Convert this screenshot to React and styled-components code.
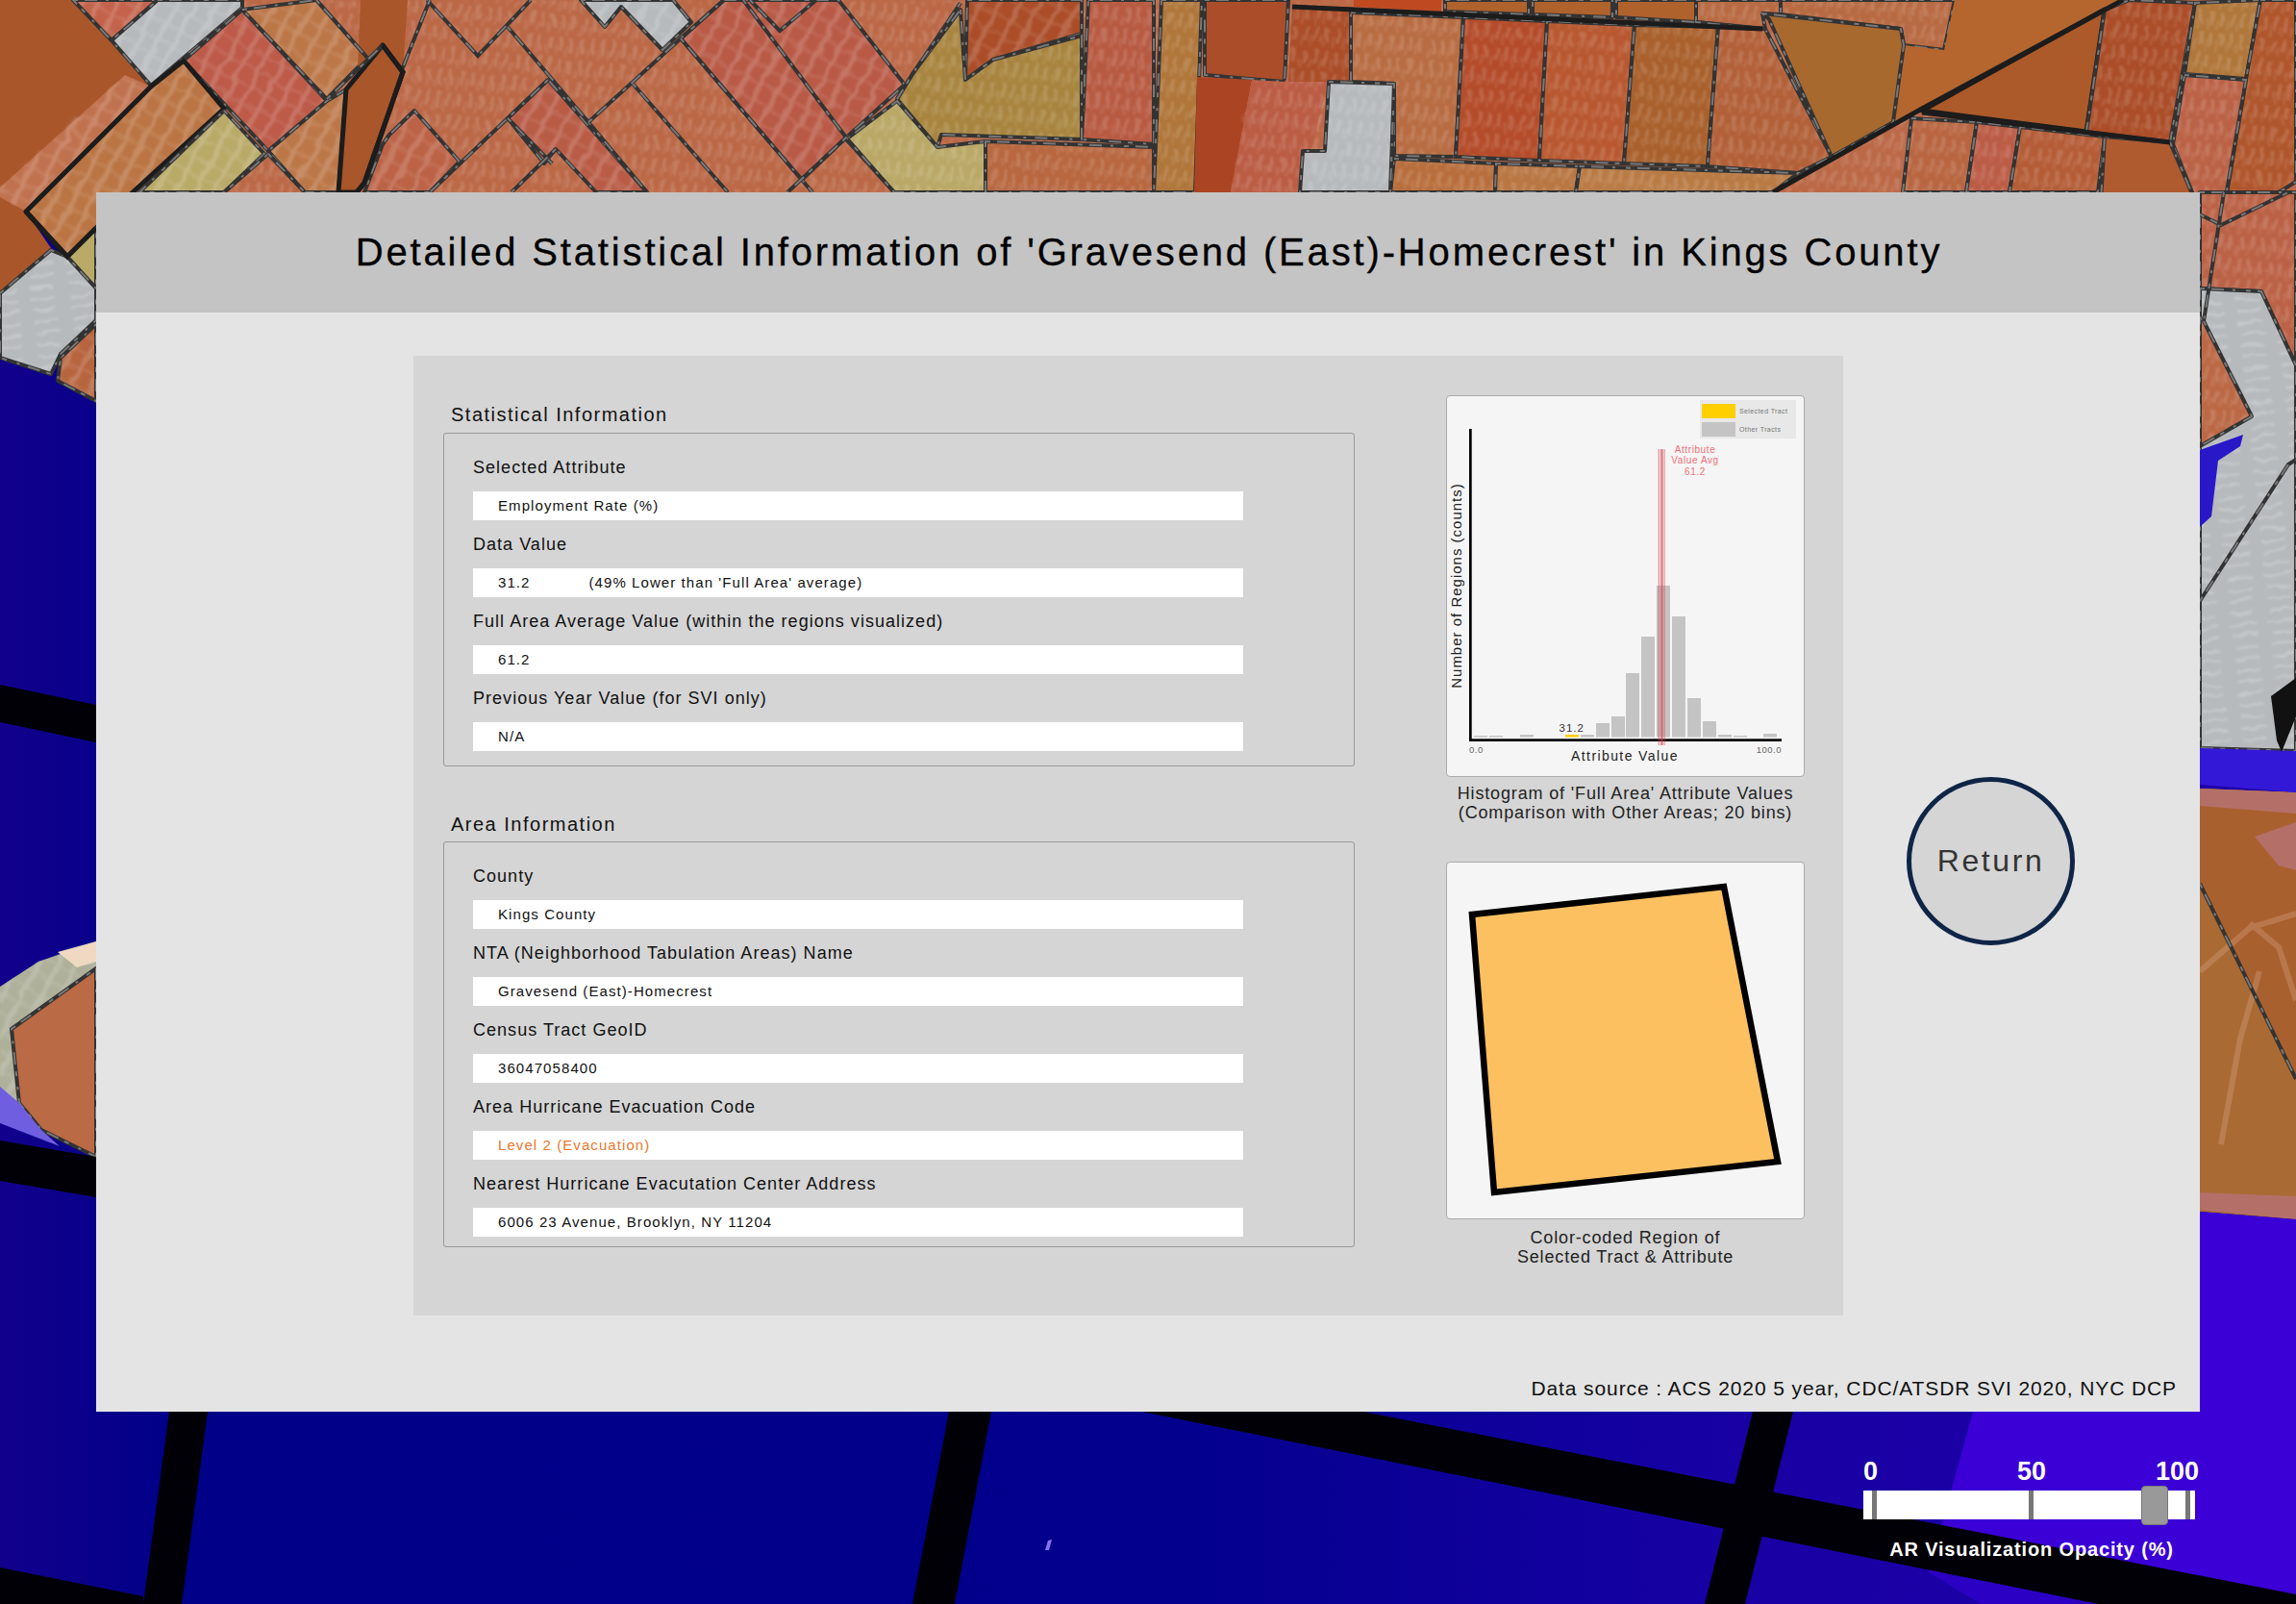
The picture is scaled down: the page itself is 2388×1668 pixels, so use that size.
import React from "react";
import styled, { createGlobalStyle } from "styled-components";

const GlobalStyle = createGlobalStyle`
  html, body { margin: 0; padding: 0; }
  body { font-family: "Liberation Sans", Arial, sans-serif; color: #111; }
`;

const Page = styled("div")`
  position: relative;
  width: 2388px;
  height: 1668px;
  overflow: hidden;
  padding: 200px 100px 0;
  box-sizing: border-box;
  background: #000088;
`;

const MapLayer = styled("svg")`
  position: absolute;
  inset: 0;
`;

const Modal = styled("main")`
  position: relative;
  width: 2188px;
  height: 1268px;
  background: #e4e4e4;
`;

const Header = styled("header")`
  height: 125px;
  display: flex;
  align-items: center;
  justify-content: center;
  padding-left: 2px;
  background: #c4c4c4;
`;

const Title = styled("h1")`
  margin: 0;
  font-size: 40px;
  font-weight: 400;
  letter-spacing: 2.85px;
  color: #000;
  -webkit-text-stroke: 0.3px #000;
`;

const Body = styled("div")`
  display: flex;
  align-items: flex-start;
  gap: 66px;
  padding: 45px 0 0 330px;
`;

const Panel = styled("section")`
  width: 1487px;
  height: 998px;
  box-sizing: border-box;
  display: flex;
  padding: 41px 0 0 31px;
  background: #d5d5d5;
`;

const InfoColumn = styled("div")`
  width: 948px;
  margin-right: 95px;
  margin-top: 8px;
`;

const SectionTitle = styled("h2")`
  margin: ${props => (props.$first ? "0" : "48px")} 0 ${props => (props.$first ? "7px" : "6px")} 8px;
  font-size: 20px;
  line-height: 24px;
  font-weight: 400;
  letter-spacing: 1.5px;
`;

const FieldBox = styled("div")`
  width: 948px;
  box-sizing: border-box;
  padding: 23px 0 ${props => props.$bottom}px 30px;
  border: 1px solid #999;
  border-radius: 3px;
  display: flex;
  flex-direction: column;
  gap: 13px;
`;

const Field = styled("div")`
  display: flex;
  flex-direction: column;
  gap: 12px;
`;

const FieldLabel = styled("div")`
  font-size: 18px;
  line-height: 25px;
  letter-spacing: 1.03px;
`;

const FieldValue = styled("div")`
  width: 801px;
  height: 30px;
  box-sizing: border-box;
  display: flex;
  align-items: center;
  padding: 0 0 1px 26px;
  background: #fff;
  font-size: 15px;
  letter-spacing: 1.08px;
  color: ${props => props.$color || "#111"};
`;

const ValueNote = styled("span")`
  margin-left: 61px;
`;

const ChartColumn = styled("div")`
  width: 373px;
  display: flex;
  flex-direction: column;
  gap: 41px;
`;

const Figure = styled("figure")`
  margin: 0;
`;

const ChartCard = styled("div")`
  width: 373px;
  height: ${props => props.$height}px;
  box-sizing: border-box;
  background: #f5f5f5;
  border: 1px solid #aaa;
  border-radius: 4px;
  svg { display: block; }
`;

const Caption = styled("figcaption")`
  margin-top: ${props => props.$top}px;
  text-align: center;
  font-size: 18px;
  line-height: 20px;
  letter-spacing: 0.85px;
  color: #222;
`;

const ReturnButton = styled("button")`
  width: 175px;
  height: 175px;
  margin-top: 438px;
  padding: 0;
  border: 5px solid #0f2547;
  border-radius: 50%;
  background: #d5d5d5;
  font-family: inherit;
  font-size: 32px;
  letter-spacing: 2.6px;
  color: #333;
`;

const Source = styled("footer")`
  margin-top: 64px;
  padding-right: 24px;
  text-align: right;
  font-size: 21px;
  line-height: 24px;
  letter-spacing: 0.9px;
`;

const OpacityControl = styled("div")`
  position: relative;
  width: 350px;
  margin: 47px 0 0 1838px;
  color: #fff;
`;

const ScaleRow = styled("div")`
  display: grid;
  grid-template-columns: 160px 144px auto;
  height: 30px;
  font-size: 27px;
  line-height: 30px;
  font-weight: 700;
`;

const Track = styled("div")`
  position: relative;
  width: 345px;
  height: 30px;
  margin-top: 5px;
  background: #fff;
`;

const Tick = styled("i")`
  position: absolute;
  top: 0;
  bottom: 0;
  left: ${props => props.$left}px;
  width: 5px;
  background: #777;
`;

const Thumb = styled("i")`
  position: absolute;
  top: -5px;
  left: 289px;
  width: 28px;
  height: 41px;
  box-sizing: border-box;
  background: #999;
  border: 1px solid #777;
  border-radius: 4px;
`;

const ControlLabel = styled("div")`
  margin-top: 19px;
  text-align: center;
  font-size: 20px;
  line-height: 24px;
  font-weight: 700;
  letter-spacing: 0.85px;
`;

// map pieces: colour, texture (a diagonal, b upright, c streaks, none), outline, points
const CELLS = [
  ["#a9562a", "", 0, "0,0 76,0 157,90 27,220 53,258 0,305"],
  ["#c0724e", "a", 0, "0,195 130,78 157,90 27,220 0,205"],
  ["#c4634c", "a", 1, "76,0 164,0 116,42"],
  ["#b6babd", "a", 1, "164,0 252,0 252,8 157,89 116,42"],
  ["#bd5a48", "a", 1, "252,10 340,105 279,157 191,63"],
  ["#bb7544", "a", 2, "27,220 157,90 191,63 233,113 138,200 100,237 70,267"],
  ["#b9aa68", "a", 1, "233,115 275,160 233,200 145,200"],
  ["#bc7748", "a", 1, "252,10 329,0 382,60 340,103"],
  ["#bc7748", "a", 1, "340,105 360,93 352,200 317,200 279,157"],
  ["#a9562a", "", 0, "375,0 424,0 419,75 398,47 372,70"],
  ["#a9562a", "", 2, "398,47 419,75 379,190 371,200 352,200 360,93"],
  ["#bc6246", "a", 1, "431,115 478,168 447,200 379,200 398,150 405,140"],
  ["#b95c46", "a", 1, "528,123 570,83 673,200 620,200 578,155 566,170"],
  ["#b95a46", "a", 1, "708,40 753,0 872,0 941,88 880,143 834,187"],
  ["#b6babd", "a", 1, "604,0 700,0 719,23 689,52 646,7 629,28"],
  ["#ab4d28", "a", 1, "1006,0 1125,0 1125,35 1033,62 1004,83"],
  ["#b85a42", "b", 1, "1132,0 1200,0 1200,150 1125,145"],
  ["#a8853f", "b", 1, "999,10 1004,83 1033,62 1125,37 1125,145 979,140 975,153 933,103 949,77"],
  ["#b9a866", "b", 1, "933,105 975,153 1025,147 1025,200 930,200 880,145"],
  ["#b8673f", "b", 1, "1025,147 1200,153 1200,200 1025,200"],
  ["#b0763a", "b", 1, "1208,0 1250,0 1243,200 1200,200"],
  ["#ab4d28", "", 1, "1253,0 1340,0 1336,85 1253,78"],
  ["#ab4422", "", 0, "1245,80 1302,83 1280,200 1242,200"],
  ["#bb5c44", "b", 0, "1302,83 1336,85 1405,13 1382,85 1352,200 1280,200"],
  ["#ab4d28", "b", 0, "1344,7 1408,7 1405,85 1340,85"],
  ["#bf4a22", "", 0, "1408,0 1499,0 1499,12 1408,7"],
  ["#b0622c", "", 1, "1503,0 1590,0 1590,15 1503,12"],
  ["#b0622c", "", 1, "1594,0 1677,0 1677,18 1594,15"],
  ["#b0622c", "", 1, "1681,0 1764,0 1764,23 1681,18"],
  ["#b86c42", "b", 1, "1405,13 1522,18 1514,163 1450,162 1450,87 1405,85"],
  ["#b44c2a", "b", 1, "1522,18 1609,22 1601,167 1514,163"],
  ["#b85830", "b", 1, "1609,22 1700,26 1689,170 1601,167"],
  ["#a9602c", "b", 1, "1700,26 1787,28 1776,173 1689,170"],
  ["#b26038", "b", 1, "1787,28 1836,30 1905,163 1870,180 1776,173"],
  ["#b86a42", "b", 1, "1852,0 2033,0 2022,52 1980,47 1977,30 1852,15"],
  ["#b86a42", "b", 1, "1764,0 1852,0 1852,15 1833,14 1836,30 1764,23"],
  ["#b5662f", "", 0, "2033,0 2208,0 1999,113 1969,127 1980,47 2022,52"],
  ["#a8692e", "", 1, "1833,14 1977,30 1980,47 1969,127 1905,163 1840,20"],
  ["#ac5a2a", "", 2, "2189,10 2170,137 1999,115"],
  ["#ab4d28", "b", 1, "2215,0 2283,3 2257,148 2170,137 2189,10"],
  ["#b0763a", "b", 1, "2283,3 2351,0 2336,82 2272,77"],
  ["#b0562c", "b", 1, "2351,0 2388,0 2388,189 2310,237 2336,82"],
  ["#bb6246", "b", 1, "2272,78 2336,83 2310,233 2288,220 2260,150"],
  ["#b86540", "b", 1, "1988,123 2056,127 2045,200 1979,200"],
  ["#bb5c46", "b", 1, "2056,127 2101,132 2090,200 2045,200"],
  ["#b45c36", "b", 1, "2101,132 2189,142 2182,200 2090,200"],
  ["#b05a30", "", 1, "2189,142 2257,148 2288,220 2288,260 2182,260"],
  ["#b86e3c", "b", 1, "1450,165 1556,170 1555,200 1446,200"],
  ["#b87642", "b", 1, "1556,170 1643,173 1639,200 1555,200"],
  ["#b97a44", "b", 1, "1643,173 1870,180 1844,200 1639,200"],
  ["#b6babd", "b", 1, "1382,85 1450,87 1446,200 1352,200 1355,157 1378,157"],
  ["#bb6246", "b", 1, "2288,200 2388,200 2388,380 2352,303 2288,300"],
  ["#b6babd", "c", 1, "2288,300 2352,303 2388,380 2388,781 2288,778"],
  ["#bb6844", "b", 1, "2292,334 2342,433 2288,464 2288,330"],
  ["#b9aa68", "", 1, "70,267 100,237 100,300"],
  ["#b7653f", "a", 1, "63,372 100,337 100,417 60,396"],
  ["#b6babd", "c", 1, "0,305 53,260 70,267 100,300 100,333 63,368 53,389 0,372"],
  ["#aeb09a", "a", 0, "0,1026 40,1000 100,979 100,1007 12,1070 20,1147 43,1175 0,1150"],
  ["#ba6a44", "", 1, "12,1070 100,1007 100,1203 43,1175 20,1147"]
];

const LINES = [
  "444,0 497,58 552,0",
  "528,28 612,127 673,200",
  "570,83 528,123 447,200",
  "612,127 708,40 753,0",
  "658,87 757,200",
  "708,40 834,187 845,200",
  "528,123 574,170",
  "578,155 532,200",
  "773,0 880,143 930,200",
  "880,143 819,200",
  "780,0 811,32 849,0",
  "999,3 949,77 933,103",
  "329,0 382,60",
  "447,0 417,75",
  "340,103 398,47",
  "279,160 233,200",
  "279,160 317,200",
  "1764,23 1833,30",
  "2288,223 2310,234 2380,200",
  "2313,200 2292,334",
  "2288,625 2380,483 2388,478",
  "2288,919 2388,1122"
];

const HEAVY_LINES = [
  "1344,7 1833,30",
  "2208,0 1999,113 1844,200",
  "1999,117 2257,148",
  "398,47 419,75 379,190 371,200",
  "27,220 70,267 100,237"
];

const BLACK_BANDS = [
  "0,712 100,733 100,772 0,751",
  "0,1186 100,1203 100,1245 0,1228",
  "176,1468 216,1468 189,1668 149,1668",
  "987,1468 1031,1468 993,1668 949,1668",
  "0,1630 149,1660 149,1668 0,1668",
  "1188,1468 1418,1468 2388,1658 2388,1668 2182,1668",
  "1823,1468 1865,1468 1815,1668 1773,1668"
];

const TEXTURE_FILL = { a: "url(#hatchA)", b: "url(#hatchB)", c: "url(#hatchC)" };

const CityMap = () => (
  <MapLayer width="2388" height="1668" viewBox="0 0 2388 1668">
    <defs>
      <linearGradient id="water" x1="0" x2="1" y1="0" y2="0">
        <stop offset="0" stopColor="#12008c" />
        <stop offset="0.08" stopColor="#000088" />
        <stop offset="0.5" stopColor="#02008c" />
        <stop offset="0.75" stopColor="#1700a4" />
        <stop offset="1" stopColor="#2000a8" />
      </linearGradient>
      <pattern id="hatchA" width="18" height="18" patternUnits="userSpaceOnUse" patternTransform="rotate(-62)">
        <rect width="18" height="5" fill="#fff" opacity="0.16" />
        <rect x="4" y="5" width="4" height="13" fill="#fff" opacity="0.08" />
      </pattern>
      <pattern id="hatchB" width="11" height="23" patternUnits="userSpaceOnUse" patternTransform="rotate(6)">
        <rect width="4" height="15" fill="#fff" opacity="0.14" />
        <rect x="7" y="9" width="3" height="11" fill="#fff" opacity="0.09" />
      </pattern>
      <pattern id="hatchC" width="40" height="12" patternUnits="userSpaceOnUse" patternTransform="rotate(-6)">
        <rect width="26" height="3" fill="#fff" opacity="0.2" />
      </pattern>
      <filter id="rough" x="0" y="0" width="100%" height="100%">
        <feTurbulence type="fractalNoise" baseFrequency="0.06" numOctaves="2" seed="4" result="noise" />
        <feDisplacementMap in="SourceGraphic" in2="noise" scale="10" xChannelSelector="R" yChannelSelector="G" />
        <feGaussianBlur stdDeviation="0.9" />
      </filter>
    </defs>
    <rect width="2388" height="1668" fill="url(#water)" />
    <rect width="2388" height="205" fill="#bb6846" />
    <rect width="2388" height="205" fill="url(#hatchB)" filter="url(#rough)" />
    <polygon points="2052,1468 2388,1468 2388,1668 2280,1668 2006,1635" fill="#3a00d6" />
    <polygon points="2006,1635 2060,1668 2230,1668" fill="#2c00c4" />
    <polygon points="2288,820 2388,824 2388,1268 2288,1260" fill="#aa6a34" />
    <polygon points="2288,919 2388,1122 2388,824 2288,820" fill="#a9602f" />
    <polygon points="2288,820 2388,824 2388,846 2288,838" fill="#b47068" />
    <polygon points="2345,870 2388,855 2388,905 2370,900" fill="#b47068" />
    <polygon points="2288,1240 2388,1244 2388,1268 2288,1258" fill="#b47068" />
    <polygon points="2288,1260 2388,1268 2388,1668 2288,1668" fill="#3a00d6" />
    <g fill="none" stroke="#e0b090" strokeWidth="6" opacity="0.3">
      <polyline points="2288,1010 2340,965 2388,950" />
      <polyline points="2310,1190 2330,1080 2350,1010" />
      <polyline points="2340,960 2370,985 2388,1040" />
    </g>
    {CELLS.map(([color, texture, outline, points]) => (
      <g key={points}>
        <polygon points={points} fill={color} />
        {texture && <polygon points={points} fill={TEXTURE_FILL[texture]} filter="url(#rough)" />}
        {outline > 0 && (
          <polygon
            points={points}
            fill="none"
            stroke={outline === 2 ? "#1c1c1c" : "#333"}
            strokeWidth={outline === 2 ? 5 : 4}
            strokeLinejoin="round"
          />
        )}
        {outline === 1 && (
          <polygon
            points={points}
            fill="none"
            stroke="#8a8a8a"
            strokeWidth="2"
            strokeOpacity="0.8"
            strokeDasharray="5 7 13 9 3 11"
          />
        )}
      </g>
    ))}
    {LINES.map(points => (
      <g key={points} fill="none">
        <polyline points={points} stroke="#333" strokeWidth="4" />
        <polyline points={points} stroke="#8a8a8a" strokeWidth="2" strokeOpacity="0.8" strokeDasharray="5 7 13 9 3 11" />
      </g>
    ))}
    {HEAVY_LINES.map(points => (
      <polyline key={points} points={points} fill="none" stroke="#1c1c1c" strokeWidth="5" />
    ))}
    <polygon points="2288,778 2388,781 2388,824 2288,816" fill="#3418d8" />
    <polygon points="2288,468 2333,452 2330,464 2307,479 2300,537 2288,548" fill="#2818c8" />
    <polygon points="2362,724 2388,705 2388,745 2373,782 2368,770" fill="#111" />
    <polygon points="0,1130 20,1147 43,1175 62,1192 0,1168" fill="#6f5fe0" />
    <polygon points="60,990 100,979 100,1000 80,1006" fill="#efd9c2" />
    {BLACK_BANDS.map(points => (
      <polygon key={points} points={points} fill="#000006" />
    ))}
    <polygon points="1090,1602 1094,1601 1091,1612 1087,1612" fill="#8a70f0" />
  </MapLayer>
);

// bar tops in chart coordinates, one per bin, null where the bin is empty
const BIN_TOPS = [354, 354, null, 353, null, null, 353, 353, 341, 334, 289, 251, 198, 230, 315, 339, 353, 354, null, 352];
const BIN_LEFTS = [29, 45, 61, 77, 93, 109, 124, 140, 156, 172, 187, 203, 219, 235, 251, 267, 283, 299, 315, 330];

const Histogram = () => (
  <svg width="371" height="395" viewBox="1 1 371 395" fontFamily="Liberation Sans, Arial, sans-serif">
    <rect x="264" y="5" width="100" height="40" fill="#e8e8e8" />
    <rect x="266" y="9" width="35" height="15" fill="#ffcf00" />
    <rect x="266" y="28" width="35" height="15" fill="#c4c4c4" />
    <text x="305" y="19" fontSize="7" letterSpacing="0.4" fill="#777">Selected Tract</text>
    <text x="305" y="37.5" fontSize="7" letterSpacing="0.4" fill="#777">Other Tracts</text>
    {BIN_TOPS.map((top, i) =>
      top === null ? null : (
        <rect
          key={i}
          x={BIN_LEFTS[i]}
          y={top}
          width="14"
          height={355.5 - top}
          fill={i === 6 ? "#ffcf00" : "#c4c4c4"}
        />
      )
    )}
    <rect x="24" y="35" width="2.7" height="325" fill="#000" />
    <rect x="24" y="357.3" width="325" height="2.7" fill="#000" />
    <g fill="#d6464e" opacity="0.6">
      <rect x="220.7" y="56" width="1.2" height="308" />
      <rect x="222.9" y="56" width="3" height="308" />
      <rect x="226.7" y="56" width="1" height="308" />
    </g>
    <g fontSize="10" letterSpacing="0.6" fill="#f07078" textAnchor="middle">
      <text x="259" y="60">Attribute</text>
      <text x="259" y="71">Value Avg</text>
      <text x="259" y="83">61.2</text>
    </g>
    <text x="130.7" y="350" fontSize="11.5" letterSpacing="1" fill="#333" textAnchor="middle">31.2</text>
    <text x="24" y="372" fontSize="9.5" letterSpacing="0.5" fill="#666">0.0</text>
    <text x="349" y="372" fontSize="9.5" letterSpacing="0.5" fill="#666" textAnchor="end">100.0</text>
    <text x="186" y="380" fontSize="14" letterSpacing="1.4" fill="#222" textAnchor="middle">Attribute Value</text>
    <text
      transform="translate(15.5 198) rotate(-90)"
      fontSize="15"
      letterSpacing="1"
      fill="#222"
      textAnchor="middle"
    >
      Number of Regions (counts)
    </text>
  </svg>
);

const TractShape = () => (
  <svg width="371" height="370" viewBox="1 1 371 370">
    <polygon points="27,55 289,26 345,312 50,344" fill="#fdc060" stroke="#000" strokeWidth="6.5" strokeLinejoin="miter" />
  </svg>
);

const STAT_FIELDS = [
  { label: "Selected Attribute", value: "Employment Rate (%)" },
  { label: "Data Value", value: "31.2", note: "(49% Lower than 'Full Area' average)" },
  { label: "Full Area Average Value (within the regions visualized)", value: "61.2" },
  { label: "Previous Year Value (for SVI only)", value: "N/A" }
];

const AREA_FIELDS = [
  { label: "County", value: "Kings County" },
  { label: "NTA (Neighborhood Tabulation Areas) Name", value: "Gravesend (East)-Homecrest" },
  { label: "Census Tract GeoID", value: "36047058400" },
  { label: "Area Hurricane Evacuation Code", value: "Level 2 (Evacuation)", color: "#e8772e" },
  { label: "Nearest Hurricane Evacutation Center Address", value: "6006 23 Avenue, Brooklyn, NY 11204" }
];

const Fields = ({ items, bottom }) => (
  <FieldBox $bottom={bottom}>
    {items.map(item => (
      <Field key={item.label}>
        <FieldLabel>{item.label}</FieldLabel>
        <FieldValue $color={item.color}>
          {item.value}
          {item.note && <ValueNote>{item.note}</ValueNote>}
        </FieldValue>
      </Field>
    ))}
  </FieldBox>
);

export default function App() {
  return (
    <Page>
      <GlobalStyle />
      <CityMap />
      <Modal>
        <Header>
          <Title>Detailed Statistical Information of 'Gravesend (East)-Homecrest' in Kings County</Title>
        </Header>
        <Body>
          <Panel>
            <InfoColumn>
              <SectionTitle $first>Statistical Information</SectionTitle>
              <Fields items={STAT_FIELDS} bottom={15} />
              <SectionTitle>Area Information</SectionTitle>
              <Fields items={AREA_FIELDS} bottom={10} />
            </InfoColumn>
            <ChartColumn>
              <Figure>
                <ChartCard $height={397}>
                  <Histogram />
                </ChartCard>
                <Caption $top={7}>
                  Histogram of 'Full Area' Attribute Values
                  <br />
                  (Comparison with Other Areas; 20 bins)
                </Caption>
              </Figure>
              <Figure>
                <ChartCard $height={372}>
                  <TractShape />
                </ChartCard>
                <Caption $top={9}>
                  Color-coded Region of
                  <br />
                  Selected Tract &amp; Attribute
                </Caption>
              </Figure>
            </ChartColumn>
          </Panel>
          <ReturnButton>Return</ReturnButton>
        </Body>
        <Source>Data source : ACS 2020 5 year, CDC/ATSDR SVI 2020, NYC DCP</Source>
      </Modal>
      <OpacityControl>
        <ScaleRow>
          <span>0</span>
          <span>50</span>
          <span>100</span>
        </ScaleRow>
        <Track>
          <Tick $left={9} />
          <Tick $left={172} />
          <Tick $left={335} />
          <Thumb />
        </Track>
        <ControlLabel>AR Visualization Opacity (%)</ControlLabel>
      </OpacityControl>
    </Page>
  );
}
